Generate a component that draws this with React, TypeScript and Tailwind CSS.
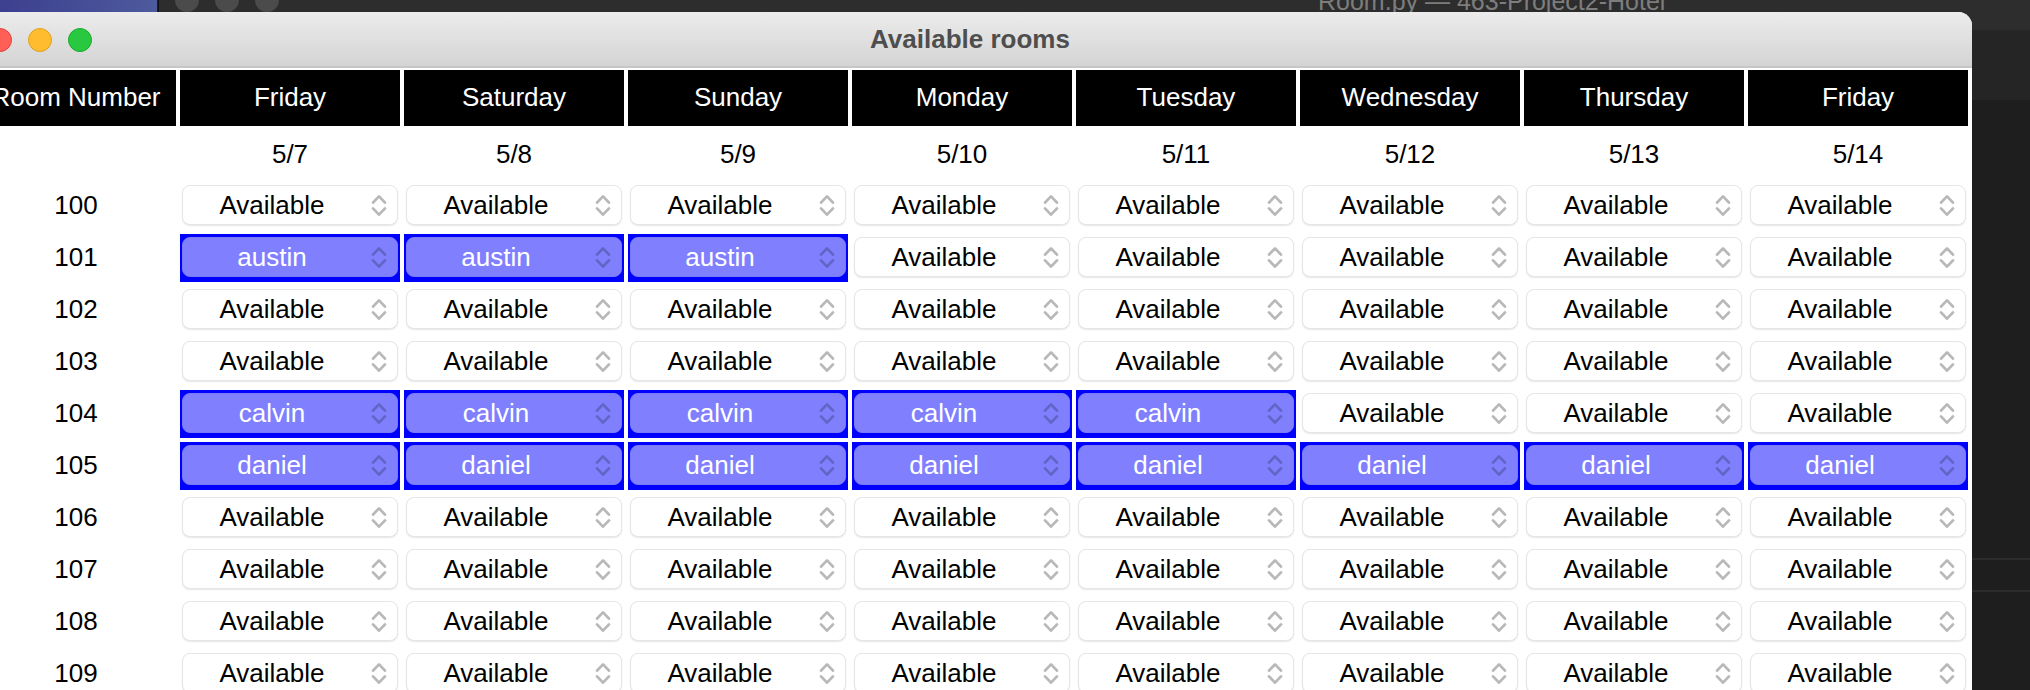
import React from "react";

const days = [
  { name: "Friday", date: "5/7" },
  { name: "Saturday", date: "5/8" },
  { name: "Sunday", date: "5/9" },
  { name: "Monday", date: "5/10" },
  { name: "Tuesday", date: "5/11" },
  { name: "Wednesday", date: "5/12" },
  { name: "Thursday", date: "5/13" },
  { name: "Friday", date: "5/14" },
];

const bookings: Record<number, string[]> = {
  101: ["austin", "austin", "austin"],
  104: ["calvin", "calvin", "calvin", "calvin", "calvin"],
  105: ["daniel", "daniel", "daniel", "daniel", "daniel", "daniel", "daniel", "daniel"],
};

const rooms = [100, 101, 102, 103, 104, 105, 106, 107, 108, 109];

const font = { fontFamily: '"Liberation Sans", Arial, sans-serif' };

const Chevrons = ({ booked }: { booked: boolean }) => (
  <svg width="16" height="23" viewBox="0 0 16 23" fill="none" className="shrink-0">
    <path
      d="M2 8.6 L8 2.4 L14 8.6 M2 14.4 L8 20.6 L14 14.4"
      stroke={booked ? "#6464c6" : "#b8b8b8"}
      strokeWidth="2.8"
      strokeLinecap="round"
      strokeLinejoin="round"
    />
  </svg>
);

const SelectCell = ({ value }: { value?: string }) => {
  const booked = !!value;
  return (
    <div className={`h-[48px] pt-[3px] px-[2px] ${booked ? "bg-[#0000ff]" : "bg-white"}`}>
      <div
        className={`h-[40px] rounded-[8px] flex items-center pr-[10px] ${
          booked
            ? "bg-[#8080ff] border border-[#7a7af6]"
            : "bg-white border border-[#e6e6e6] shadow-[0_1px_1.5px_rgba(0,0,0,0.1)]"
        }`}
      >
        <span
          className={`flex-1 mr-[10px] text-center text-[26px] leading-none ${
            booked ? "text-white" : "text-black"
          }`}
        >
          {value ?? "Available"}
        </span>
        <Chevrons booked={booked} />
      </div>
    </div>
  );
};

export default function App() {
  return (
    <div className="relative w-[2030px] h-[690px] overflow-hidden bg-[#1e1e1e]" style={font}>
      {/* desktop wallpaper */}
      <div className="absolute left-0 top-0 w-[157px] h-[40px] bg-gradient-to-r from-[#3d3f8f] to-[#4d5a9c]" />
      {/* editor window behind */}
      <div className="absolute left-[158px] top-[-18px] right-0 bottom-0 flex flex-col border-l border-[#111]">
        <div className="h-[48px] bg-[#2d2d2d] relative flex items-center">
          <div className="absolute left-[16px] top-[6px] flex gap-[16px]">
            <div className="w-[24px] h-[24px] rounded-full bg-[#4b4b4b]" />
            <div className="w-[24px] h-[24px] rounded-full bg-[#4b4b4b]" />
            <div className="w-[24px] h-[24px] rounded-full bg-[#4b4b4b]" />
          </div>
          <div className="absolute left-[1159px] top-[7px] text-[25px] text-[#7d7d7d] leading-none">
            Room.py — 463-Project2-Hotel
          </div>
        </div>
        <div className="h-[70px] bg-[#252526]" />
        <div className="flex-1 bg-[#1e1e1e] flex flex-col">
          <div className="h-[458px]" />
          <div className="h-[2px] bg-[#2b2b2b]" />
          <div className="h-[30px]" />
          <div className="h-[2px] bg-[#2b2b2b]" />
        </div>
      </div>

      {/* Tk window */}
      <div className="absolute left-[-32px] top-[12px] w-[2004px] h-[700px] bg-white rounded-t-[14px] overflow-hidden">
        <div className="h-[56px] bg-gradient-to-b from-[#ececec] to-[#d4d4d4] border-b-2 border-[#c6c6c6] relative flex items-center justify-center">
          <div className="absolute left-[20px] top-[16px] flex gap-[16px]">
            <div className="w-[24px] h-[24px] rounded-full bg-[#ff5f57] border border-[#e0443e]" />
            <div className="w-[24px] h-[24px] rounded-full bg-[#febc2e] border border-[#dea123]" />
            <div className="w-[24px] h-[24px] rounded-full bg-[#28c840] border border-[#1aab29]" />
          </div>
          <span className="text-[26px] font-bold text-[#4e4e4e] leading-none">Available rooms</span>
        </div>

        <div className="pt-[2px] pl-[8px]">
          <div className="grid grid-cols-[200px_repeat(8,220px)] gap-x-[4px] gap-y-[4px]">
            <div className="h-[56px] bg-black text-white text-[26px] flex items-center justify-center pb-[2px]">
              Room Number
            </div>
            {days.map((d, i) => (
              <div
                key={"h" + i}
                className="h-[56px] bg-black text-white text-[26px] flex items-center justify-center pb-[2px]"
              >
                {d.name}
              </div>
            ))}

            <div className="h-[48px]" />
            {days.map((d, i) => (
              <div key={"d" + i} className="h-[48px] flex items-center justify-center text-[26px] text-black">
                {d.date}
              </div>
            ))}

            {rooms.map((room) => (
              <React.Fragment key={room}>
                <div className="h-[48px] flex items-center justify-center pb-[2px] text-[26px] text-black">
                  {room}
                </div>
                {days.map((_, i) => (
                  <SelectCell key={room + "-" + i} value={bookings[room]?.[i]} />
                ))}
              </React.Fragment>
            ))}
          </div>
        </div>
      </div>
    </div>
  );
}
